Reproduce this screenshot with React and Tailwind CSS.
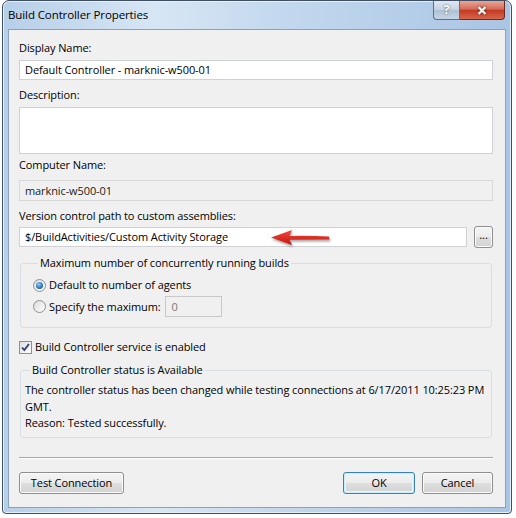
import React from 'react';

function Button({ children, className = '', primary = false }) {
  return (
    <button
      className={`h-[22px] rounded-[3px] border text-[11px] text-black bg-[linear-gradient(#f4f4f4,#ececec_48%,#dedede_52%,#d3d3d3)] ${primary ? 'border-[#3c7fb1] shadow-[inset_0_0_0_1px_#c7ecfb,inset_0_0_0_2px_#e8f6fd]' : 'border-[#8f8f8f] shadow-[inset_0_0_0_1px_#fbfbfb]'} ${className}`}
    >
      {children}
    </button>
  );
}

function Radio({ checked }) {
  return (
    <span className="w-[13px] h-[13px] rounded-full border border-[#8e8f8f] bg-[linear-gradient(135deg,#dcdcdc,#ffffff)] flex items-center justify-center shrink-0">
      {checked && (
        <span className="w-[7px] h-[7px] rounded-full bg-[radial-gradient(circle_at_40%_35%,#8fd2f6,#2a6fb7_60%,#1c4f8c)]" />
      )}
    </span>
  );
}

function Checkbox() {
  return (
    <span className="w-[13px] h-[13px] border border-[#8e8f8f] bg-[linear-gradient(135deg,#dedede,#ffffff)] flex items-center justify-center shrink-0">
      <svg width="9" height="9" viewBox="0 0 9 9">
        <path d="M1 4.5 L3.3 7 L8 1" fill="none" stroke="#2b3f76" strokeWidth="1.8" />
      </svg>
    </span>
  );
}

function RedArrow() {
  return (
    <svg
      width="64"
      height="20"
      viewBox="0 0 64 20"
      className="absolute left-[249px] top-[0px] drop-shadow-[1px_2px_1px_rgba(0,0,0,0.35)]"
    >
      <defs>
        <linearGradient id="ar" x1="0" y1="0" x2="0" y2="1">
          <stop offset="0" stopColor="#f04a3c" />
          <stop offset="1" stopColor="#c8140e" />
        </linearGradient>
      </defs>
      <path
        d="M2 9.5 L23 2 L20.5 8 Q40 7.5 60 8.5 L60.5 11.5 Q40 11.5 20.5 11.8 L23 17 Z"
        fill="url(#ar)"
      />
    </svg>
  );
}

export default function App() {
  return (
    <div className="w-[516px] h-[518px] bg-white pl-[2px] font-['Open_Sans',sans-serif] text-[11px] tracking-[-0.1px] text-black leading-[16px]">
      <div className="w-[510px] h-[514px] rounded-t-[7px] rounded-b-[4px] border border-[#3f4f63] bg-[linear-gradient(90deg,#b6cfe9,#d7e6f4_30%,#c3d8ee_55%,#a9c5e4)] flex flex-col shadow-[inset_0_0_0_1px_#e6f0fa]">
        {/* タイトルバー */}
        <div className="h-[28px] shrink-0 flex items-start pl-[5px] pr-[6px]">
          <span className="mt-[6px] text-[11.5px] text-black">Build Controller Properties</span>
          <div className="ml-auto flex">
            <div className="w-[27px] h-[19px] rounded-bl-[4px] border border-t-0 border-[#5d6e86] bg-[linear-gradient(#e1e9f2,#c3d1e0_50%,#aebfd3_51%,#c7d6e6)] flex items-center justify-center text-[12px] font-bold text-white [text-shadow:0_0_2px_#3a4a60]">
              ?
            </div>
            <div className="w-[45px] h-[19px] rounded-br-[4px] border border-t-0 border-l-0 border-[#6b2a22] bg-[linear-gradient(#e9a596,#d56b58_45%,#c43b22_52%,#d8664b)] flex items-center justify-center">
              <svg width="10" height="9" viewBox="0 0 10 9" className="drop-shadow-[0_0_1px_#5a1008]">
                <path d="M1.5 1 L8.5 8 M8.5 1 L1.5 8" stroke="white" strokeWidth="2.2" />
              </svg>
            </div>
          </div>
        </div>

        {/* 本体 */}
        <div className="flex-1 mx-[5px] mb-[5px] border border-[#8aa1bb] bg-[#f0f0f0] pl-[10px] pr-[12px] pt-[10px] flex flex-col">
          <div>Display Name:</div>
          <div className="mt-[4px] h-[20px] shrink-0 border border-[#cfd1d6] bg-white px-[5px] flex items-center">
            Default Controller - marknic-w500-01
          </div>

          <div className="mt-[7px]">Description:</div>
          <div className="mt-[4px] h-[47px] shrink-0 border border-[#cfd1d6] bg-white" />

          <div className="mt-[3px]">Computer Name:</div>
          <div className="mt-[7px] h-[21px] shrink-0 border border-[#d8d8d8] bg-[#f0f0f0] px-[5px] flex items-center text-[#222]">
            marknic-w500-01
          </div>

          <div className="mt-[7px]">Version control path to custom assemblies:</div>
          <div className="mt-[2px] flex gap-[7px] items-center shrink-0">
            <div className="relative flex-1 h-[20px] border border-[#cfd1d6] bg-white px-[5px] flex items-center">
              $/BuildActivities/Custom Activity Storage
              <RedArrow />
            </div>
            <Button className="w-[19px] h-[19px] text-[9px] leading-[10px] pb-[4px]">...</Button>
          </div>

          <fieldset className="mt-[7px] mx-[1px] border border-[#d5dfe5] rounded-[3px] pl-[12px] pb-[10px] shrink-0">
            <legend className="ml-[5px] px-[2px]">Maximum number of concurrently running builds</legend>
            <div className="mt-[6px] flex items-center gap-[2px]">
              <Radio checked />
              <span className="ml-[1px]">Default to number of agents</span>
            </div>
            <div className="mt-[3px] flex items-center gap-[2px]">
              <Radio />
              <span className="ml-[1px]">Specify the maximum:</span>
              <div className="ml-[2px] w-[57px] h-[21px] border border-[#c8c8c8] bg-[#f0f0f0] px-[6px] flex items-center text-[#7a7a7a]">
                0
              </div>
            </div>
          </fieldset>

          <div className="mt-[11px] flex items-center gap-[3px]">
            <Checkbox />
            <span>Build Controller service is enabled</span>
          </div>

          <fieldset className="mt-[7px] mx-[1px] border border-[#d5dfe5] rounded-[3px] pl-[4px] pb-[5px] shrink-0">
            <legend className="ml-[5px] px-[2px]">Build Controller status is Available</legend>
            <div className="pt-[4px] leading-[16.5px]">
              The controller status has been changed while testing connections at 6/17/2011 10:25:23 PM
              <br />
              GMT.
              <br />
              Reason: Tested successfully.
            </div>
          </fieldset>

          <div className="mt-[19px] h-px shrink-0 bg-[#a8a8a8] border-b border-white box-content" />

          <div className="mt-[13px] flex">
            <Button className="w-[105px]">Test Connection</Button>
            <Button primary className="ml-auto w-[72px]">OK</Button>
            <Button className="ml-[7px] w-[71px]">Cancel</Button>
          </div>
        </div>
      </div>
    </div>
  );
}
